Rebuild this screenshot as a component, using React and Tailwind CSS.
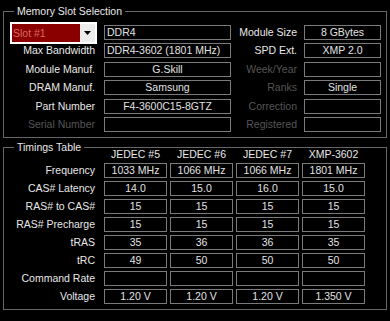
const SLOT_ROWS = [
  { label: 'Max Bandwidth', value: 'DDR4-3602 (1801 MHz)', align: 'left', rLabel: 'SPD Ext.', rValue: 'XMP 2.0' },
  { label: 'Module Manuf.', value: 'G.Skill', rLabel: 'Week/Year', rDim: true, rValue: '' },
  { label: 'DRAM Manuf.', value: 'Samsung', rLabel: 'Ranks', rDim: true, rValue: 'Single' },
  { label: 'Part Number', value: 'F4-3600C15-8GTZ', rLabel: 'Correction', rDim: true, rValue: '' },
  { label: 'Serial Number', dim: true, value: '', rLabel: 'Registered', rDim: true, rValue: '' },
]

const HEADERS = ['JEDEC #5', 'JEDEC #6', 'JEDEC #7', 'XMP-3602']

const TIMINGS = [
  { label: 'Frequency', values: ['1033 MHz', '1066 MHz', '1066 MHz', '1801 MHz'] },
  { label: 'CAS# Latency', values: ['14.0', '15.0', '16.0', '15.0'] },
  { label: 'RAS# to CAS#', values: ['15', '15', '15', '15'] },
  { label: 'RAS# Precharge', values: ['15', '15', '15', '15'] },
  { label: 'tRAS', values: ['35', '36', '36', '35'] },
  { label: 'tRC', values: ['49', '50', '50', '50'] },
  { label: 'Command Rate', values: ['', '', '', ''] },
  { label: 'Voltage', values: ['1.20 V', '1.20 V', '1.20 V', '1.350 V'] },
]

function Box({ children, className = '', align = 'center' }) {
  return (
    <div
      className={`h-[15px] border border-[#7a7a7a] flex items-center leading-[13px] text-[#e2e2e2] whitespace-nowrap overflow-hidden ${
        align === 'left' ? 'justify-start pl-[2px]' : 'justify-center'
      } ${className}`}
    >
      {children}
    </div>
  )
}

function Label({ children, dim, className = '' }) {
  return (
    <div className={`text-right leading-[13px] whitespace-nowrap ${dim ? 'text-[#555555]' : 'text-[#e8e8e8]'} ${className}`}>
      {children}
    </div>
  )
}

export default function App() {
  return (
    <div className="w-[390px] h-[321px] bg-black pt-[11px] font-['Liberation_Sans',Arial,sans-serif] text-[10.5px] overflow-hidden">
      {/* Memory Slot Selection */}
      <div className="relative mx-[3px] h-[127px] border border-[#666666] pt-[11.3px]">
        <span className="absolute left-[10px] -top-[7px] bg-black px-[3px] leading-[13px] text-[#e8e8e8]">
          Memory Slot Selection
        </span>

        <div className="flex items-center h-[18.4px]">
          <div className="w-[94px] pl-[6px]">
            <div className="w-[87px] h-[22px] border-2 border-white bg-[#8a0000] flex">
              <span className="pl-[1px] leading-[18px] text-[#d96a6a]">Slot #1</span>
              <div className="ml-auto w-[15px] h-full bg-[#ececec] flex items-center justify-center">
                <svg width="7" height="4" viewBox="0 0 7 4">
                  <path d="M0 0h7L3.5 4z" fill="#000" />
                </svg>
              </div>
            </div>
          </div>
          <Box className="ml-[6px] w-[127px]" align="left">DDR4</Box>
          <Label className="w-[67px] pr-[1px]">Module Size</Label>
          <Box className="ml-[6px] w-[77px]">8 GBytes</Box>
        </div>

        {SLOT_ROWS.map((row) => (
          <div key={row.label} className="flex items-center h-[18.4px]">
            <Label dim={row.dim} className="w-[94px] pr-[3px]">{row.label}</Label>
            <Box className="ml-[6px] w-[127px]" align={row.align}>{row.value}</Box>
            <Label dim={row.rDim} className="w-[67px] pr-[1px]">{row.rLabel}</Label>
            <Box className="ml-[6px] w-[77px]">{row.rValue}</Box>
          </div>
        ))}
      </div>

      {/* Timings Table */}
      <div className="relative mx-[3px] mt-[9px] h-[163px] border border-[#666666]">
        <span className="absolute left-[10px] -top-[7px] bg-black px-[3px] leading-[13px] text-[#e8e8e8]">
          Timings Table
        </span>

        <div className="flex h-[13px] items-center pl-[100px] gap-[3px]">
          {HEADERS.map((h) => (
            <div key={h} className="w-[63px] text-center leading-[13px] text-[#e8e8e8] whitespace-nowrap">
              {h}
            </div>
          ))}
        </div>

        {TIMINGS.map((row) => (
          <div key={row.label} className="flex items-center h-[18px]">
            <Label className="w-[94px] pr-[3px]">{row.label}</Label>
            <div className="ml-[6px] flex gap-[3px]">
              {row.values.map((v, i) => (
                <Box key={i} className="w-[63px]">{v}</Box>
              ))}
            </div>
          </div>
        ))}
      </div>
    </div>
  )
}
